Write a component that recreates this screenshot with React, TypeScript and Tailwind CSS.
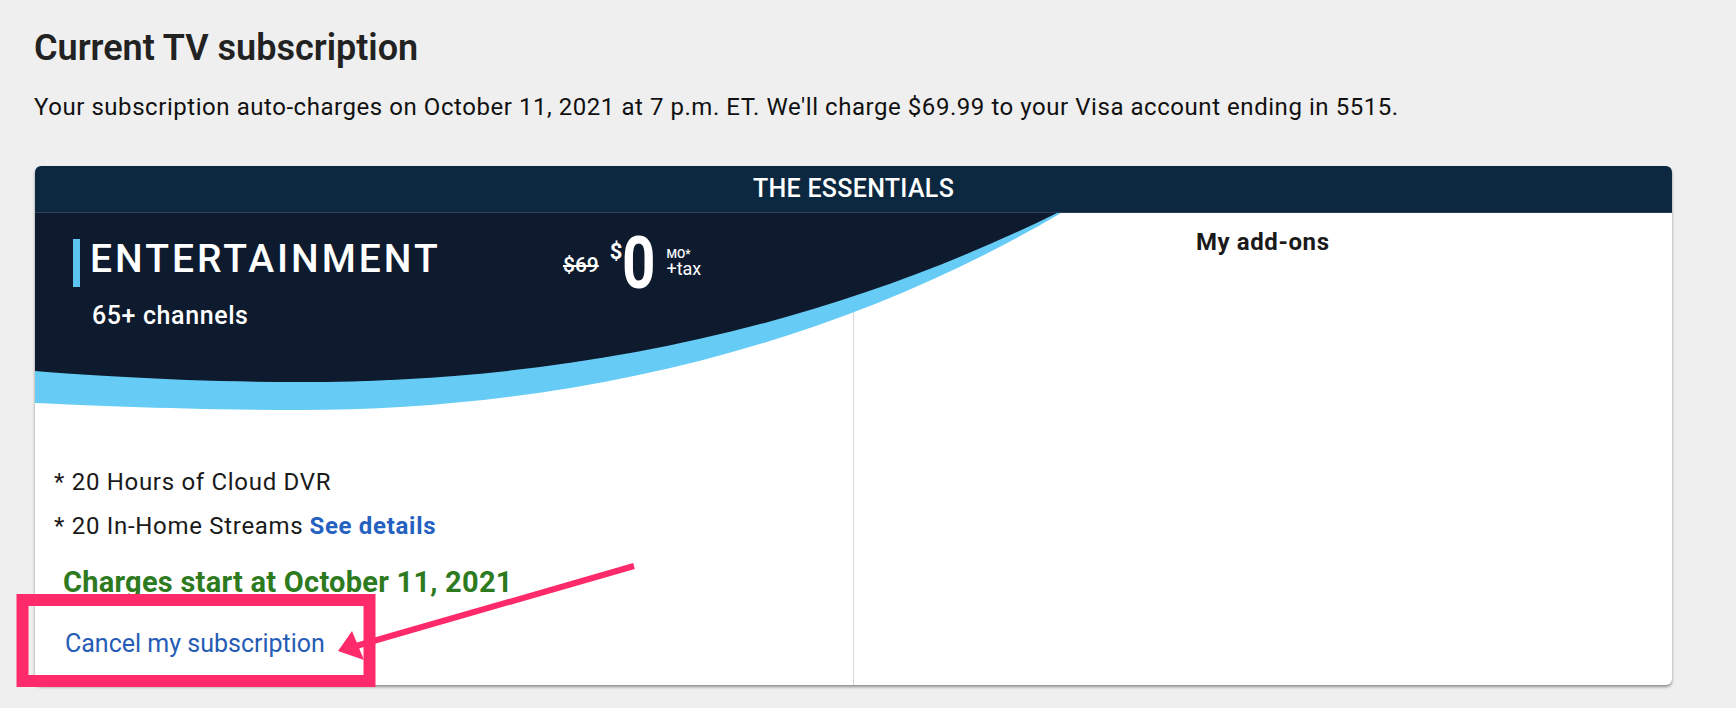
import React from "react";

export default function App() {
  return (
    <div className="relative h-[708px] w-full overflow-hidden bg-[#efefef] font-['Roboto',sans-serif]">
      <div className="pl-[34px] pt-[30px]">
        <h1 className="text-[36px] leading-[36px] font-semibold text-[#222222]">
          Current TV subscription
        </h1>
        <p className="mt-[29px] text-[24px] leading-[24px] tracking-[0.55px] text-[#111111]">
          Your subscription auto-charges on October 11, 2021 at 7 p.m. ET. We'll charge $69.99 to your Visa account ending in 5515.
        </p>

        <div className="mt-[47px] ml-[1px] w-[1637px] overflow-hidden rounded-[6px] bg-white shadow-[0_2px_3px_rgba(0,0,0,0.4)]">
          <div className="flex h-[47px] items-center justify-center border-b border-[#2b4058] bg-[#0c2840] text-[25px] font-medium tracking-[0.3px] text-white">
            THE ESSENTIALS
          </div>

          <div className="relative grid h-[472px] grid-cols-2">
            <div className="border-r border-[#d6d6d6]">
              <div className="relative z-10 flex items-start pl-[38px] pt-[26px]">
                <div className="h-[48px] w-[7px] bg-[#5bc5f0]" />
                <div className="ml-[10px] mt-[1px] w-[473px] text-[39px] leading-[39px] font-medium tracking-[3px] text-white">
                  ENTERTAINMENT
                </div>
                <div className="flex items-start text-white">
                  <span className="mt-[16px] text-[21px] leading-[21px] font-medium line-through">$69</span>
                  <span className="ml-[11px] mt-[2px] text-[22px] leading-[22px] font-bold">$</span>
                  <span className="-mt-[4px] inline-block w-[44px] origin-left scale-x-[0.8] text-[73px] leading-[56px] font-bold">
                    0
                  </span>
                  <div className="mt-[9px] flex flex-col">
                    <span className="text-[12px] leading-[12px] font-medium">MO*</span>
                    <span className="text-[18px] leading-[18px]">+tax</span>
                  </div>
                </div>
              </div>
              <div className="relative z-10 mt-[12px] pl-[57px] text-[25px] leading-[25px] font-medium tracking-[0.6px] text-white">
                65+ channels
              </div>

              <div className="relative z-10 mt-[132px] pl-[19px] text-[24px] leading-[44px] tracking-[0.7px] text-[#1a1a1a]">
                <div>* 20 Hours of Cloud DVR</div>
                <div>
                  * 20 In-Home Streams
                  <span className="ml-[6px] font-bold text-[#2461c0]">See details</span>
                </div>
              </div>

              <div className="relative z-10 mt-[20px] pl-[28px] text-[29px] leading-[28px] font-bold tracking-[0.25px] text-[#2d7a1f]">
                Charges start at October 11, 2021
              </div>
              <div className="relative z-10 mt-[35px] pl-[30px] text-[25px] leading-[25px] text-[#265cb5]">
                Cancel my subscription
              </div>
            </div>

            <div className="relative z-10 pt-[17px] text-center text-[24px] leading-[24px] font-bold tracking-[0.6px] text-[#1a1a1a]">
              My add-ons
            </div>

            <svg
              className="absolute left-0 top-0"
              width="1637"
              height="200"
              viewBox="0 0 1637 200"
            >
              <path
                d="M0 0 H1026 C785 142 515 197 265 197 C150 197 50 192 0 190 Z"
                fill="#66ccf5"
              />
              <path
                d="M0 0 H1022 C772 123 515 169 265 169 C150 169 50 162 0 158 Z"
                fill="#0e1b2e"
              />
            </svg>
          </div>
        </div>
      </div>

      <svg
        className="pointer-events-none absolute left-0 top-0 z-20"
        width="1736"
        height="708"
        viewBox="0 0 1736 708"
      >
        <rect x="22.5" y="600" width="347" height="81" fill="none" stroke="#ff2a6a" strokeWidth="12" />
        <line x1="634" y1="566" x2="356" y2="646" stroke="#ff2a6a" strokeWidth="6" />
        <polygon points="338,651 352,631 364,660" fill="#ff2a6a" />
      </svg>
    </div>
  );
}
